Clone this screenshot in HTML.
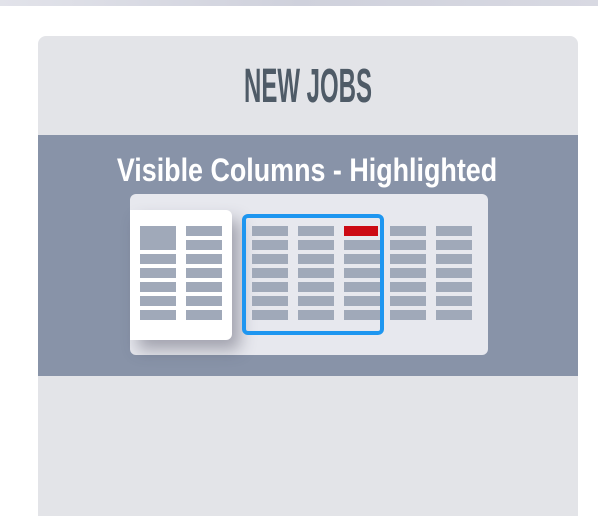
<!DOCTYPE html>
<html><head><style>
html{overflow:hidden;width:598px;height:516px}
body{margin:0;width:598px;height:516px;background:#fff;position:relative;overflow:hidden;font-family:"Liberation Sans Narrow","Liberation Sans",sans-serif}
.top{position:absolute;left:0;top:0;width:598px;height:6px;background:linear-gradient(90deg,#e2e3ea,#cfd1dc 50%,#d8d9e2)}
.card{position:absolute;left:38px;top:36px;width:540px;height:480px;background:#e3e4e8;border-radius:8px 8px 0 0}
.h{position:absolute;left:0;width:540px;top:27px;text-align:center;font-size:48px;line-height:48px;color:#4f5b67;font-weight:bold;transform:scaleX(.5)}
.band{position:absolute;left:38px;top:135px;width:540px;height:241px;background:#8893a8}
.t{position:absolute;left:8px;width:598px;top:152px;text-align:center;color:#fff;font-weight:bold;font-size:32px;line-height:36px;transform:scaleX(.84)}
.panel{position:absolute;left:130px;top:194px;width:358px;height:161px;background:#e7e8ee;border-radius:6px}
.wc{position:absolute;left:130px;top:210px;width:102px;height:130px;background:#fff;border-radius:0 6px 6px 0;box-shadow:8px 10px 16px rgba(60,60,80,.4)}
.bb{position:absolute;left:242px;top:214px;width:134px;height:113px;border:4px solid #1e96f0;border-radius:6px}
.c{position:absolute;width:36px;height:10px;background:#a0a9b9}
</style></head><body>
<div class="top"></div>
<div class="card"><div class="h">NEW JOBS</div></div>
<div class="band"></div>
<div class="t">Visible Columns - Highlighted</div>
<div class="panel"></div>
<div class="wc"></div>
<div id="cells"></div>
<div class="bb"></div>
<script>
var h='',ys=[226,240,254,268,282,296,310];
ys.forEach(function(y,i){
 if(i>1)h+='<div class="c" style="left:140px;top:'+y+'px"></div>';
 h+='<div class="c" style="left:186px;top:'+y+'px"></div>';
 [252,298,344,390,436].forEach(function(x){
  var s=(x==344&&i==0)?'background:#cc0a14;width:34px':'';
  h+='<div class="c" style="left:'+x+'px;top:'+y+'px;'+s+'"></div>';});
});
h+='<div class="c" style="left:140px;top:226px;height:24px"></div>';
document.getElementById('cells').innerHTML=h;
</script>
</body></html>
